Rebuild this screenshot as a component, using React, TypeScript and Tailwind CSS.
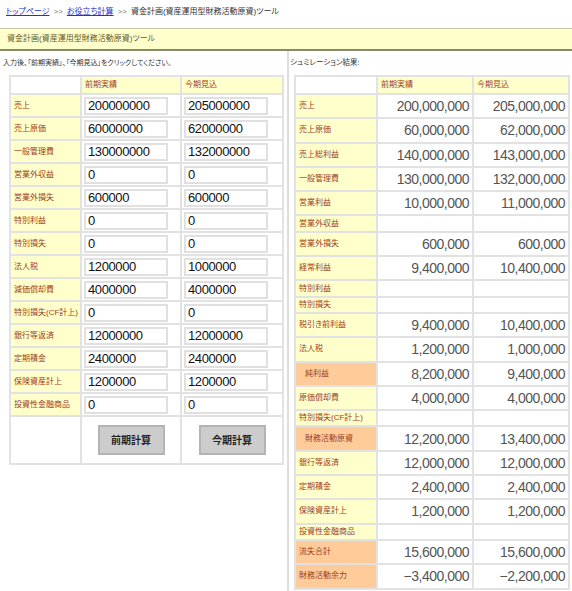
import React from 'react';

const inputRows = [
  { label: '売上', prev: '200000000', cur: '205000000' },
  { label: '売上原価', prev: '60000000', cur: '62000000' },
  { label: '一般管理費', prev: '130000000', cur: '132000000' },
  { label: '営業外収益', prev: '0', cur: '0' },
  { label: '営業外損失', prev: '600000', cur: '600000' },
  { label: '特別利益', prev: '0', cur: '0' },
  { label: '特別損失', prev: '0', cur: '0' },
  { label: '法人税', prev: '1200000', cur: '1000000' },
  { label: '減価償却費', prev: '4000000', cur: '4000000' },
  { label: '特別損失(CF計上)', prev: '0', cur: '0' },
  { label: '銀行等返済', prev: '12000000', cur: '12000000' },
  { label: '定期積金', prev: '2400000', cur: '2400000' },
  { label: '保険資産計上', prev: '1200000', cur: '1200000' },
  { label: '投資性金融商品', prev: '0', cur: '0' },
];

type ResultRow = { label: string; prev?: string; cur?: string; hl?: boolean; indent?: boolean };

const resultRows: ResultRow[] = [
  { label: '売上', prev: '200,000,000', cur: '205,000,000' },
  { label: '売上原価', prev: '60,000,000', cur: '62,000,000' },
  { label: '売上総利益', prev: '140,000,000', cur: '143,000,000' },
  { label: '一般管理費', prev: '130,000,000', cur: '132,000,000' },
  { label: '営業利益', prev: '10,000,000', cur: '11,000,000' },
  { label: '営業外収益' },
  { label: '営業外損失', prev: '600,000', cur: '600,000' },
  { label: '経常利益', prev: '9,400,000', cur: '10,400,000' },
  { label: '特別利益' },
  { label: '特別損失' },
  { label: '税引き前利益', prev: '9,400,000', cur: '10,400,000' },
  { label: '法人税', prev: '1,200,000', cur: '1,000,000' },
  { label: '純利益', prev: '8,200,000', cur: '9,400,000', hl: true, indent: true },
  { label: '原価償却費', prev: '4,000,000', cur: '4,000,000' },
  { label: '特別損失(CF計上)' },
  { label: '財務活動原資', prev: '12,200,000', cur: '13,400,000', hl: true, indent: true },
  { label: '銀行等返済', prev: '12,000,000', cur: '12,000,000' },
  { label: '定期積金', prev: '2,400,000', cur: '2,400,000' },
  { label: '保険資産計上', prev: '1,200,000', cur: '1,200,000' },
  { label: '投資性金融商品' },
  { label: '流失合計', prev: '15,600,000', cur: '15,600,000', hl: true },
  { label: '財務活動余力', prev: '−3,400,000', cur: '−2,200,000', hl: true },
];

const cell = 'border-2 border-[#e2e2e2]';
const labelCls = 'text-[8px] text-[#a0401a]';
const inputCls =
  'block w-[84px] h-[18px] border-2 border-[#e0e0e0] px-[2px] text-[13px] leading-[14px] tracking-[-0.4px] text-[#111] outline-none';
const valueCls = `${cell} text-right pr-[3px] text-[14px] leading-[18px] tracking-[-0.5px] text-[#555]`;

export default function App() {
  return (
    <div className="w-[572px] h-[591px] bg-white overflow-hidden text-[#333] font-['Liberation_Sans','Noto_Sans_CJK_JP',sans-serif] [font-feature-settings:'palt']">
      {/* breadcrumb */}
      <div className="h-[28px] pl-[6px] pt-[6px] text-[8px] leading-[12px]">
        <a href="#" className="text-[#2233cc] underline">トップページ</a>
        <span className="text-[#777] mx-[4px]">&gt;&gt;</span>
        <a href="#" className="text-[#2233cc] underline">お役立ち計算</a>
        <span className="text-[#777] mx-[4px]">&gt;&gt;</span>
        <span>資金計画(資産運用型財務活動原資)ツール</span>
      </div>

      {/* title */}
      <div className="h-[23px] bg-[#ffffcc] border-t border-[#c8c8a8] border-b-2 border-b-[#8a8a6a] pl-[7px] text-[8px] leading-[20px] text-[#5c5c30]">
        資金計画(資産運用型財務活動原資)ツール
      </div>

      <div className="flex">
        {/* left */}
        <div className="w-[289px] h-[540px] border-r-2 border-[#dedede] pt-[6px]">
          <p className="pl-[3px] text-[7px] leading-[12px]">入力後、「前期実績」、「今期見込」をクリックしてください。</p>
          <table className="ml-[9px] mt-[6px] w-[273px] border-collapse table-fixed">
            <colgroup>
              <col className="w-[71px]" />
              <col className="w-[100px]" />
              <col className="w-[102px]" />
            </colgroup>
            <tbody>
              <tr className="h-[18px]">
                <td className={`${cell} bg-white`}></td>
                <td className={`${cell} bg-[#ffffcc] ${labelCls} pl-[3px]`}>前期実績</td>
                <td className={`${cell} bg-[#ffffcc] ${labelCls} pl-[3px]`}>今期見込</td>
              </tr>
              {inputRows.map((r) => (
                <tr key={r.label} className="h-[23px]">
                  <td className={`${cell} bg-[#ffffcc] ${labelCls} pl-[3px] whitespace-nowrap`}>{r.label}</td>
                  <td className={`${cell} pl-[2px]`}>
                    <input defaultValue={r.prev} className={inputCls} />
                  </td>
                  <td className={`${cell} pl-[2px]`}>
                    <input defaultValue={r.cur} className={inputCls} />
                  </td>
                </tr>
              ))}
              <tr className="h-[48px]">
                <td className={cell}></td>
                <td className={`${cell} text-center`}>
                  <button className="w-[67px] h-[30px] bg-[#cccccc] border-2 border-[#b4b4b4] text-[10px] font-bold text-[#222]">前期計算</button>
                </td>
                <td className={`${cell} text-center`}>
                  <button className="w-[67px] h-[30px] bg-[#cccccc] border-2 border-[#b4b4b4] text-[10px] font-bold text-[#222]">今期計算</button>
                </td>
              </tr>
            </tbody>
          </table>
        </div>

        {/* right */}
        <div className="flex-1 pl-[1px] pt-[6px]">
          <p className="text-[7.5px] leading-[12px]">シュミレーション結果:</p>
          <table className="ml-[4px] mt-[6px] w-[274px] border-collapse table-fixed">
            <colgroup>
              <col className="w-[82px]" />
              <col className="w-[96px]" />
              <col className="w-[96px]" />
            </colgroup>
            <tbody>
              <tr className="h-[18px]">
                <td className={`${cell} bg-white`}></td>
                <td className={`${cell} bg-[#ffffcc] ${labelCls} pl-[3px]`}>前期実績</td>
                <td className={`${cell} bg-[#ffffcc] ${labelCls} pl-[3px]`}>今期見込</td>
              </tr>
              {resultRows.map((r) => (
                <tr key={r.label} className={r.prev ? 'h-[24.3px]' : 'h-[16.3px]'}>
                  <td
                    className={`${cell} ${r.hl ? 'bg-[#ffcc99]' : 'bg-[#ffffcc]'} ${labelCls} ${r.indent ? 'pl-[9px]' : 'pl-[3px]'} whitespace-nowrap leading-[12px]`}
                  >
                    {r.label}
                  </td>
                  <td className={valueCls}>{r.prev}</td>
                  <td className={valueCls}>{r.cur}</td>
                </tr>
              ))}
            </tbody>
          </table>
        </div>
      </div>
    </div>
  );
}
